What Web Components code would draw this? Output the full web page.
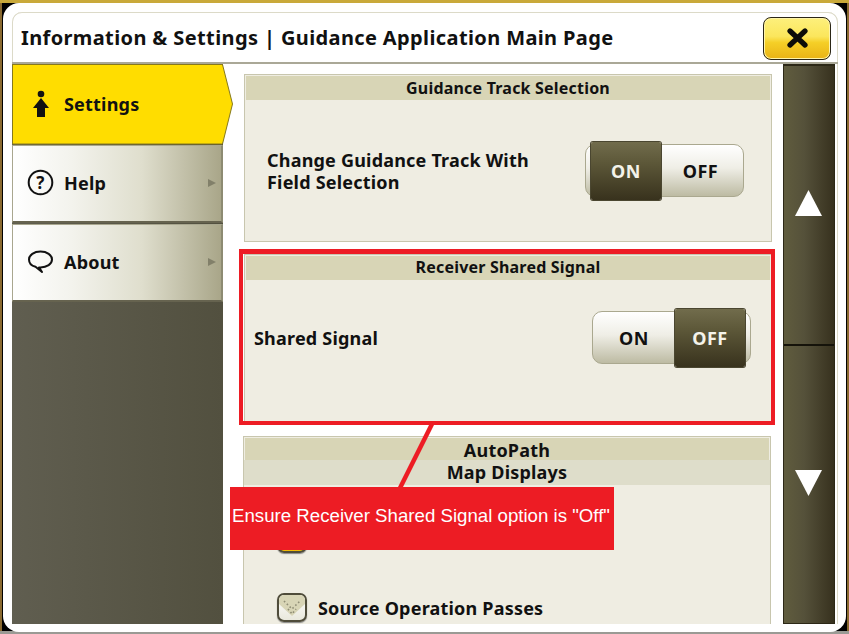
<!DOCTYPE html>
<html>
<head>
<meta charset="utf-8">
<style>
  html, body { margin: 0; height: 100%; }
  body { background: #1a1608; width: 849px; height: 634px; overflow: hidden; font-family: "Noto Sans", "Open Sans", sans-serif; font-weight: bold; color: #111; letter-spacing: 0.2px; }
</style>
</head>
<body>

<template id="tpl-window">
  <style>
    :host { display: block; position: relative; width: 849px; height: 634px; box-sizing: border-box; padding: 3px 3px 2px 3px; background: #000; }
    .edge { position: absolute; left: 0; right: 0; top: 0; height: 3px; background: #c9a93a; }
    .bottom { position: absolute; left: 0; right: 0; bottom: 0; height: 3px; background: #9a9a94; }
    .sides { position: absolute; left: 0; top: 3px; bottom: 3px; width: 2px; background: #8a6a30; }
    .sides.r { left: auto; right: 0; }
    .shell { position: relative; z-index: 1; height: 100%; box-sizing: border-box; background: #fff; border-radius: 16px; padding: 9px 8px 8px 9px; }
    .inner { height: 100%; box-sizing: border-box; display: flex; flex-direction: column; border-radius: 10px 10px 0 0; box-shadow: inset 0 1px 0 #dcdac8, inset 1px 0 0 #dcdac8, inset -1px 0 0 #dcdac8; }
    header { height: 52px; flex: none; display: flex; align-items: center; justify-content: space-between; box-sizing: border-box; padding: 0 7px 0 9px; border-bottom: 2px solid #aaa897; }
    h1 { margin: 0; font-size: 20px; font-weight: bold; letter-spacing: 0.38px; }
    .body { flex: 1; min-height: 0; display: flex; }
  </style>
  <div class="edge"></div><div class="sides"></div><div class="sides r"></div><div class="bottom"></div>
  <div class="shell">
    <div class="inner">
      <header><h1><slot name="title"></slot></h1><slot name="close"></slot></header>
      <div class="body"><slot></slot></div>
    </div>
  </div>
  <slot name="overlay"></slot>
</template>

<template id="tpl-close">
  <style>
    :host { display: block; width: 68px; height: 43px; margin-top: 2px; }
    button { display: flex; align-items: center; justify-content: center; width: 100%; height: 100%; padding: 0; box-sizing: border-box; border: 1.5px solid #2b2616; border-radius: 8px; background: linear-gradient(#fdf07c 0%, #fbe65c 45%, #f5cf27 60%, #e9b315 100%); box-shadow: inset 0 0 0 1px #fff4a8; }
    svg { display: block; }
  </style>
  <button><svg width="21" height="20" viewBox="0 0 21 20"><path d="M3 3 18 17M18 3 3 17" stroke="#0c0c08" stroke-width="5.2" stroke-linecap="round" fill="none"/></svg></button>
</template>

<template id="tpl-side">
  <style>
    :host { display: flex; flex-direction: column; flex: none; width: 211px; background: linear-gradient(90deg, #605e50, #52503f); }
  </style>
  <slot></slot>
</template>

<template id="tpl-tab">
  <style>
    :host { display: block; position: relative; height: 79px; box-sizing: border-box; font-size: 18px; }
    .tab { height: 78px; margin-top: 1px; display: flex; align-items: center; box-sizing: border-box; padding: 0 0 2px 13px; gap: 10px; border: 1px solid #a9a78f; border-right: 2px solid #8d8b72; border-bottom: 2px solid #66634f; background: linear-gradient(90deg, #fff 0%, #f3f3ed 28%, #dfdecd 62%, #a9a689 100%); }
    .ico { width: 28px; height: 28px; display: flex; align-items: center; justify-content: center; flex: none; }
    .label { flex: 1; }
    .chev { width: 0; height: 0; border-left: 8px solid #82806a; border-top: 4.5px solid transparent; border-bottom: 4.5px solid transparent; margin-right: 5px; }
    svg.outline { display: none; }
    :host([active]) { height: 80px; z-index: 2; }
    :host([active]) .tab { position: absolute; left: 0; top: 0; width: 221px; height: 80px; margin: 0; border: 0; padding: 0 0 0 15px; gap: 9px; background: none; }
    :host([active]) .ico, :host([active]) .label { position: relative; }
    :host([active]) .chev { display: none; }
    :host([active]) svg.outline { display: block; position: absolute; left: 0; top: 0; }
  </style>
  <div class="tab">
    <svg class="outline" width="221" height="81" viewBox="0 0 221 81"><path d="M.5 .5H210.500L220.500 40 210.500 80H.5Z" fill="#ffdd00" stroke="#86791c"/></svg>
    <span class="ico"><slot name="icon"></slot></span>
    <span class="label"><slot></slot></span>
    <span class="chev"></span>
  </div>
</template>

<template id="tpl-main">
  <style>
    :host { display: block; flex: none; width: 560px; height: 100%; overflow: hidden; box-sizing: border-box; padding: 10px 11px 0 21px; }
  </style>
  <slot></slot>
</template>

<template id="tpl-panel">
  <style>
    :host { display: block; box-sizing: border-box; background: #efede2; border: 1px solid #c8c6ae; }
    .head { background: #d8d5b6; border: 1px solid #efede2; border-bottom: 0; text-align: center; font-size: 16px; line-height: var(--head-lh, 24px); height: 24px; }
    .sub { display: none; }
    :host([two]) .sub { display: block; background: #deddca; text-align: center; font-size: 18px; line-height: 22px; height: 24px; padding-top: 1px; }
    :host([two]) .head { font-size: 18px; height: 21px; padding-top: 1px; line-height: 22px; }
  </style>
  <div class="head"><slot name="head"></slot></div>
  <div class="sub"><slot name="sub"></slot></div>
  <slot></slot>
</template>

<template id="tpl-row">
  <style>
    :host { display: flex; align-items: center; justify-content: space-between; box-sizing: border-box; font-size: 18px; line-height: 22px; }
  </style>
  <span><slot></slot></span>
  <slot name="control"></slot>
</template>

<template id="tpl-toggle">
  <style>
    :host { display: block; width: 159px; height: 58px; flex: none; font-size: 18px; letter-spacing: 0.5px; }
    .wrap { position: relative; display: flex; height: 53px; margin-top: 2px; box-sizing: border-box; border: 1.5px solid #aaa88f; border-radius: 10px; background: linear-gradient(#fff 0%, #efeee6 45%, #bdbba3 100%); }
    .opt { flex: 1; display: flex; align-items: center; justify-content: center; box-sizing: border-box; }
    .opt:last-child { padding-right: 3px; }
    .opt.on { position: relative; flex: none; width: 70px; height: 58px; padding: 0; margin-top: -3.5px; color: #f4f3ea; background: linear-gradient(#716c4c 0%, #5d5839 35%, #38321d 100%); border-radius: 2px; box-shadow: 0 0 0 1px #4a4630; }
    .opt.on:first-child { margin-left: 5px; }
    .opt.on:last-child { margin-right: 5px; }
  </style>
  <div class="wrap"></div>
</template>

<template id="tpl-check">
  <style>
    :host { display: flex; align-items: center; gap: 11px; font-size: 18px; }
    .box { width: 30px; height: 29px; flex: none; box-sizing: border-box; border: 2px solid #4f4c3a; border-radius: 7px; background: linear-gradient(#fff, #e9e8dc); overflow: hidden; box-shadow: 0 1px 1px #888; }
    :host([on]) .box { background: linear-gradient(#fff 30%, #f6d65a 60%, #f0b800 100%); }
    svg { display: block; }
  </style>
  <span class="box"><slot name="glyph"></slot></span>
  <span><slot></slot></span>
</template>

<template id="tpl-scroll">
  <style>
    :host { display: flex; flex-direction: column; flex: none; width: 52px; box-sizing: border-box; border: 1px solid #2c2817; border-top-width: 2px; background: linear-gradient(90deg, #605c3e 0%, #55513a 40%, #37311e 100%); }
    .b { flex: 1; display: flex; align-items: center; justify-content: center; padding-right: 1px; }
    .b + .b { border-top: 2px solid #15130a; }
    svg { display: block; }
  </style>
  <div class="b"><svg style="margin-bottom:3px" width="27" height="26" viewBox="0 0 27 26"><path d="M13.5 0 27 26H0Z" fill="#fff"/></svg></div>
  <div class="b"><svg style="margin-bottom:2px" width="27" height="26" viewBox="0 0 27 26"><path d="M0 0H27L13.5 26Z" fill="#fff"/></svg></div>
</template>

<template id="tpl-callout">
  <style>
    :host { display: block; position: absolute; left: 0; top: 0; width: 849px; height: 634px; z-index: 5; pointer-events: none; letter-spacing: 0; }
    .box { position: absolute; left: 239px; top: 249px; width: 536px; height: 176px; box-sizing: border-box; border: 4px solid #ed1c24; border-top-width: 5px; }
    svg { position: absolute; left: 0; top: 0; }
    .note { position: absolute; left: 230px; top: 487px; width: 382px; padding-right: 2px; height: 63px; background: #ed1c24; color: #fff; font: normal 18.67px/58px "Liberation Sans", Arial, sans-serif; white-space: nowrap; text-align: center; }
  </style>
  <div class="box"></div>
  <svg width="849" height="634"><path d="M432 424 400 488" stroke="#ed1c24" stroke-width="4.5" fill="none"/></svg>
  <div class="note"><slot></slot></div>
</template>

<app-window>
  <span slot="title">Information &amp; Settings | Guidance Application Main Page</span>
  <close-button slot="close"></close-button>

  <side-menu>
    <side-tab active>
      <svg slot="icon" width="20" height="28" viewBox="0 0 20 28"><circle cx="10" cy="4" r="3.300" fill="#111"/><path d="M10 8 18 18H14V27H6V18H2Z" fill="#111"/></svg>
      Settings
    </side-tab>
    <side-tab>
      <svg slot="icon" width="27" height="27" viewBox="0 0 27 27"><circle cx="13.500" cy="13.500" r="11.800" fill="none" stroke="#111" stroke-width="2"/><text x="13.500" y="19.500" text-anchor="middle" font-family="Noto Sans" font-weight="bold" font-size="17" fill="#111">?</text></svg>
      Help
    </side-tab>
    <side-tab>
      <svg slot="icon" width="27" height="25" viewBox="0 0 27 25"><path d="M13.500 2.500C20 2.500 25 6 25 10.500S20 18.500 13.500 18.500C13 18.500 12.400 18.500 12 18.400L15 23 8.500 17.800C4.500 16.800 2 14 2 10.500 2 6 7 2.500 13.500 2.500Z" fill="none" stroke="#111" stroke-width="2" stroke-linejoin="round"/></svg>
      About
    </side-tab>
  </side-menu>

  <main-pane>
    <settings-panel style="height:168px">
      <span slot="head">Guidance Track Selection</span>
      <setting-row style="padding:42px 27px 0 22px">
        <span>Change Guidance Track With<br>Field Selection</span>
        <toggle-switch slot="control" value="ON"></toggle-switch>
      </setting-row>
    </settings-panel>

    <settings-panel style="height:168px;margin:12px 0 0 0;--head-lh:22px">
      <span slot="head">Receiver Shared Signal</span>
      <setting-row style="padding:29px 20px 0 9px">
        <span>Shared Signal</span>
        <toggle-switch slot="control" value="OFF"></toggle-switch>
      </setting-row>
    </settings-panel>

    <settings-panel two style="height:220px;margin:14px 1px 0 -1px">
      <span slot="head">AutoPath</span>
      <span slot="sub">Map Displays</span>
      <div style="display:flex;flex-direction:column;gap:40px;padding:39px 0 0 33px">
        <!-- label of this one sits under the red note in the screenshot -->
        <check-item on style="height:29px"></check-item>
        <check-item>
          <svg slot="glyph" width="26" height="25" viewBox="0 0 26 25"><path d="M0 0H26V9L13 21 0 9Z" fill="#d8d5b6"/><path d="M5 6 13 14 21 6M9 14 13 19 17 14" stroke="#8f8d75" stroke-width="1.600" stroke-dasharray="1.600 2.400" fill="none"/></svg>
          Source Operation Passes
        </check-item>
      </div>
    </settings-panel>
  </main-pane>

  <scroll-rail></scroll-rail>

  <call-out slot="overlay">Ensure Receiver Shared Signal option is "Off"</call-out>
</app-window>

<script>
  // plain elements that only stamp their template
  const stamp = (name, tplId) => {
    customElements.define(name, class extends HTMLElement {
      constructor() {
        super();
        this.attachShadow({ mode: "open" }).appendChild(document.getElementById(tplId).content.cloneNode(true));
      }
    });
  };

  stamp("app-window", "tpl-window");
  stamp("close-button", "tpl-close");
  stamp("side-menu", "tpl-side");
  stamp("side-tab", "tpl-tab");
  stamp("main-pane", "tpl-main");
  stamp("settings-panel", "tpl-panel");
  stamp("setting-row", "tpl-row");
  stamp("check-item", "tpl-check");
  stamp("scroll-rail", "tpl-scroll");
  stamp("call-out", "tpl-callout");

  class ToggleSwitch extends HTMLElement {
    constructor() {
      super();
      this.attachShadow({ mode: "open" }).appendChild(document.getElementById("tpl-toggle").content.cloneNode(true));
    }

    connectedCallback() {
      const wrap = this.shadowRoot.querySelector(".wrap");
      const value = this.getAttribute("value");
      ["ON", "OFF"].forEach((opt) => {
        const el = document.createElement("span");
        el.className = opt === value ? "opt on" : "opt";
        el.textContent = opt;
        wrap.appendChild(el);
      });
    }
  }
  customElements.define("toggle-switch", ToggleSwitch);
</script>
</body>
</html>
